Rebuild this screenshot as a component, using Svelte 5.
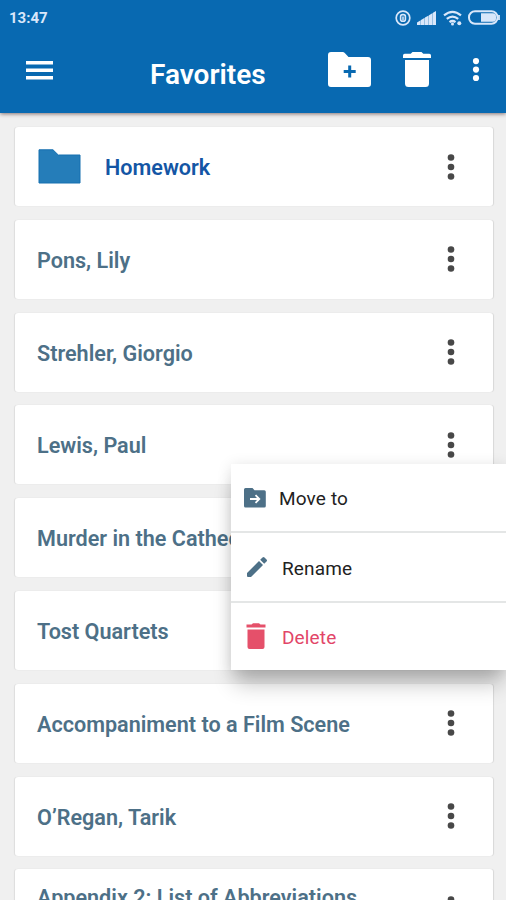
<script lang="ts">
  type Item = {
    id: number;
    title: string;
    folder?: boolean;
    tall?: boolean;
  };

  const items: Item[] = [
    { id: 1, title: "Homework", folder: true },
    { id: 2, title: "Pons, Lily" },
    { id: 3, title: "Strehler, Giorgio" },
    { id: 4, title: "Lewis, Paul" },
    { id: 5, title: "Murder in the Cathedral" },
    { id: 6, title: "Tost Quartets" },
    { id: 7, title: "Accompaniment to a Film Scene" },
    { id: 8, title: "O’Regan, Tarik" },
    { id: 9, title: "Appendix 2: List of Abbreviations", tall: true },
  ];

  let openId = $state<number | null>(4);

  function toggle(id: number) {
    openId = openId === id ? null : id;
  }
</script>

<div class="screen">
  <header>
    <div class="status">
      <span class="time">13:47</span>
      <svg width="16" height="16" viewBox="0 0 16 16" fill="none" stroke="currentColor" aria-hidden="true">
        <circle cx="8" cy="8" r="6.8" stroke-width="1.7" />
        <rect x="5.6" y="4.6" width="4.8" height="6.6" rx="2" stroke-width="1.6" />
        <path d="M8 6.5v4" stroke-width="1.5" />
      </svg>
      <svg class="signal" width="20" height="14" viewBox="0 0 20 14" fill="currentColor" aria-hidden="true">
        <path d="M0 14v-2.600l3.700-2.200V14zM4 14V9l3.700-2.200V14zM8 14V6.600l3.700-2.200V14zM12 14V4.200L15.700 2v12zM16 14V1.800L19 0v14z" />
      </svg>
      <svg class="wifi" width="20" height="16" viewBox="0 0 20 16" fill="none" stroke="currentColor" stroke-width="2.2" aria-hidden="true">
        <path d="M1 5.300Q9.500-1.700 18 5.300M3.800 8.900q5.700-4.700 11.400 0M6.500 12.200q3-2.400 6 0" />
        <circle cx="9.500" cy="14" r="1.500" fill="currentColor" stroke="none" />
        <circle cx="16.300" cy="13.300" r="2" fill="currentColor" stroke="none" />
      </svg>
      <svg class="battery" width="32" height="15" viewBox="0 0 32 15" fill="none" stroke="currentColor" aria-hidden="true">
        <rect x="1" y="1.200" width="28.500" height="12.600" rx="6" stroke-width="2" />
        <path d="M13 3.200h12a3 3 0 0 1 3 3v2.600a3 3 0 0 1-3 3H13z" fill="currentColor" stroke="none" />
        <path d="M31 5v5" stroke-width="1.800" />
      </svg>
    </div>
    <div class="toolbar">
      <button aria-label="Menu">
        <svg class="burger" width="27" height="19" viewBox="0 0 27 19" fill="currentColor">
          <path d="M0 0h27v3.500H0zM0 7.500h27V11H0zM0 15h27v3.500H0z" />
        </svg>
      </button>
      <h1>Favorites</h1>
      <button aria-label="New folder">
        <svg width="43" height="36" viewBox="0 0 43 36">
          <path d="M3 0h11.500q1.500 0 2.500 1.200L20.500 5H40a3 3 0 0 1 3 3v24a3 3 0 0 1-3 3H3a3 3 0 0 1-3-3V3a3 3 0 0 1 3-3z" fill="currentColor" />
          <path d="M21.700 13.400v12M15.700 19.400h12" stroke="#0869b1" stroke-width="3" />
        </svg>
      </button>
      <button class="trash-btn" aria-label="Delete">
        <svg width="28" height="36" viewBox="0 0 28 36" fill="currentColor">
          <path d="M0 6V3.500a1.700 1.700 0 0 1 1.700-1.700h6L9.500 0h9l1.800 1.800h6A1.700 1.700 0 0 1 28 3.500V6zM2 8h24v23.500a3.500 3.500 0 0 1-3.500 3.500h-17A3.500 3.500 0 0 1 2 31.500z" />
        </svg>
      </button>
      <button class="more-btn" aria-label="More">
        <svg width="8" height="26" viewBox="0 0 8 26" fill="currentColor">
          <circle cx="4" cy="4.100" r="3.100" />
          <circle cx="4" cy="12.600" r="3.100" />
          <circle cx="4" cy="21" r="3.100" />
        </svg>
      </button>
    </div>
  </header>

  <ul class="list">
    {#each items as item (item.id)}
      <li class="card" class:folder={item.folder} class:tall={item.tall}>
        {#if item.folder}
          <svg width="43" height="35" viewBox="0 0 43 35" aria-hidden="true">
            <path d="M1 .8h14L20.300 6H42v28H1z" fill="#257db9" stroke="#1670b0" stroke-width="1" />
          </svg>
        {/if}
        <span class="title">{item.title}</span>
        <button class="row-more" aria-label="Options" onclick={() => toggle(item.id)}>
          <svg width="10" height="28" viewBox="0 0 10 28" fill="currentColor">
            <circle cx="5" cy="4.500" r="3.300" />
            <circle cx="5" cy="14" r="3.300" />
            <circle cx="5" cy="23.500" r="3.300" />
          </svg>
        </button>
        {#if openId === item.id}
          <div class="menu">
            <button class="move">
              <svg width="22" height="20" viewBox="0 0 22 20" aria-hidden="true">
                <path d="M1.500 0h7l2 2.200h9.800a1.500 1.500 0 0 1 1.500 1.500V18a1.500 1.500 0 0 1-1.500 1.500H1.500A1.500 1.500 0 0 1 0 18V1.500A1.500 1.500 0 0 1 1.500 0z" fill="currentColor" />
                <path d="M6 11h9M11.500 7.200l3.800 3.800-3.800 3.800" fill="none" stroke="#fff" stroke-width="1.800" />
              </svg>
              <span>Move to</span>
            </button>
            <button class="rename">
              <svg width="22" height="22" viewBox="0 0 22 22" fill="currentColor" aria-hidden="true">
                <path d="M1 17L13 5l4 4L5 21H2a1 1 0 0 1-1-1zM14.200 3.800l2.300-2.300a1.400 1.400 0 0 1 2 0l2 2a1.400 1.400 0 0 1 0 2l-2.300 2.300z" />
              </svg>
              <span>Rename</span>
            </button>
            <button class="delete">
              <svg width="20" height="26" viewBox="0 0 20 26" fill="currentColor" aria-hidden="true">
                <path d="M.5 4.500v-3h5L7 .3h6l1.500 1.200h5v3zM1.500 6.500h17V24a2 2 0 0 1-2 2h-13a2 2 0 0 1-2-2z" />
              </svg>
              <span>Delete</span>
            </button>
          </div>
        {/if}
      </li>
    {/each}
  </ul>
</div>

<style>
  :global(body) {
    margin: 0;
    background: #f0f0f0;
  }
  .screen {
    width: 506px;
    height: 900px;
    overflow: hidden;
    background: #f0f0f0;
    font-family: Roboto, "Liberation Sans", sans-serif;
  }
  button {
    display: flex;
    align-items: center;
    padding: 0;
    border: 0;
    background: none;
    color: inherit;
    font: inherit;
  }
  svg {
    display: block;
    flex: none;
  }
  header {
    height: 113px;
    background: #0869b1;
    color: #fff;
    box-shadow: 0 1px 4px rgba(60, 30, 30, 0.6);
  }
  .status {
    display: flex;
    align-items: center;
    height: 35px;
    padding: 0 6px 0 9px;
    color: #d9e7fa;
  }
  .time {
    margin-right: auto;
    font-size: 15px;
    font-weight: 700;
    line-height: 20px;
  }
  .signal {
    margin-left: 6px;
  }
  .wifi {
    margin-left: 6px;
  }
  .battery {
    margin-left: 5px;
  }
  .toolbar {
    display: flex;
    align-items: center;
    height: 70px;
    padding: 0 26px;
  }
  h1 {
    flex: 1;
    margin: 10px 0 0 97px;
    font-size: 28px;
    font-weight: 600;
    line-height: 32px;
  }
  .trash-btn {
    margin-left: 32px;
  }
  .more-btn {
    margin-left: 41px;
  }
  .list {
    display: flex;
    flex-direction: column;
    gap: 13.8px;
    margin: 0;
    padding: 14px 13px 0 14.5px;
    list-style: none;
  }
  .card {
    position: relative;
    display: flex;
    flex: none;
    align-items: center;
    box-sizing: border-box;
    height: 79px;
    padding: 0 37px 0 22.5px;
    border-radius: 3px;
    background: #fff;
    box-shadow: 1px 0 1px rgba(0, 0, 0, 0.1), -1px 0 1px rgba(0, 0, 0, 0.08);
    color: #4d7087;
  }
  .folder {
    padding-left: 23.5px;
  }
  .title {
    flex: 1;
    padding-top: 3px;
    font-size: 21.6px;
    font-weight: 600;
    line-height: 26px;
    white-space: nowrap;
  }
  .tall .title {
    padding: 0 0 22px;
  }
  .folder .title {
    margin-left: 24px;
    padding-top: 2px;
    color: #1456a5;
  }
  .row-more {
    color: #484848;
  }
  .menu {
    position: absolute;
    z-index: 2;
    top: 58.5px;
    left: 216.5px;
    width: 275px;
    background: #fff;
    box-shadow: 0 18px 20px -4px rgba(0, 0, 0, 0.24), 0 2px 14px rgba(0, 0, 0, 0.12);
  }
  .menu button {
    box-sizing: border-box;
    width: 100%;
    height: 69.5px;
    padding-left: 13px;
    border-bottom: 2.5px solid #e4e6e6;
    color: #4d7087;
  }
  .menu button:last-child {
    height: 67px;
    border-bottom: 0;
  }
  .menu span {
    margin-left: 13px;
    padding-top: 3px;
    color: #222;
    font-size: 19px;
    font-weight: 400;
    line-height: 24px;
    letter-spacing: 0.15px;
  }
  .menu .rename,
  .menu .delete {
    padding-left: 15px;
  }
  .menu .rename span {
    margin-left: 14px;
  }
  .menu .delete {
    color: #e5506a;
  }
  .menu .delete span {
    margin-left: 16px;
    color: #e24568;
  }
</style>
